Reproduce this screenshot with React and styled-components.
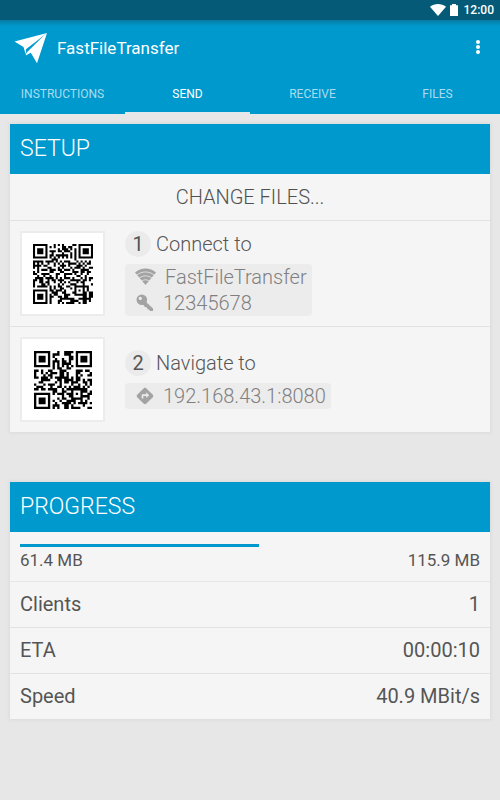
import React from 'react'
import styled, { createGlobalStyle } from 'styled-components'
import { MdDirections } from 'react-icons/md'

const GlobalStyle = createGlobalStyle`
  * {
    box-sizing: border-box;
  }
  body {
    margin: 0;
    background: #e7e7e7;
    color: #555;
    font-family: Roboto, "Noto Sans", sans-serif;
  }
`;
const StatusBar = styled.div`
  display: flex;
  justify-content: flex-end;
  align-items: center;
  gap: 4px;
  height: 20px;
  padding: 0 6px;
  background: #055a78;
  color: white;
  font-size: 12px;
  font-weight: 500;
`;
const StatusTime = styled.time`
  margin-left: 2px;
`;
const Header = styled.header`
  background: linear-gradient(#067ba2, #0099cd 6px);
  color: white;
`;
const ActionBar = styled.div`
  display: flex;
  align-items: center;
  gap: 9px;
  height: 56px;
  padding: 0 14px;
`;
const AppName = styled.h1`
  flex: 1;
  margin: 0;
  font-size: 17px;
  font-weight: 400;
`;
const MenuButton = styled.button`
  display: flex;
  padding: 0;
  border: none;
  background: none;
  color: white;
  cursor: pointer;
`;
const Tabs = styled.nav`
  display: flex;
`;
const Tab = styled.a`
  flex: 1;
  height: 38px;
  border-bottom: 2px solid ${({ $active }) => ($active ? '#e3e8ea' : 'transparent')};
  color: ${({ $active }) => ($active ? 'white' : '#a9dcf0')};
  font-size: 12px;
  line-height: 37px;
  text-align: center;
  text-decoration: none;
`;
const Content = styled.main`
  display: flex;
  flex-direction: column;
  gap: 50px;
  padding: 10px;
`;
const Card = styled.section`
  background: #f5f5f5;
  box-shadow: 0 0 3px 1px #dadada;
`;
const CardTitle = styled.h2`
  margin: 0;
  padding: 0 10px;
  background: #0099cd;
  color: white;
  font-size: 23px;
  font-weight: 300;
  line-height: 50px;
`;
const ChangeButton = styled.button`
  display: block;
  width: 100%;
  height: 47px;
  padding: 0;
  border: none;
  border-bottom: 1px solid #e2e2e2;
  background: none;
  color: #505050;
  font: 300 20px Roboto, "Noto Sans", sans-serif;
  cursor: pointer;
`;
const Step = styled.div`
  display: flex;
  align-items: center;
  gap: 20px;
  box-sizing: content-box;
  height: 105px;
  padding: 0 10px;

  & + & {
    border-top: 1px solid #e2e2e2;
  }
`;
const QrFrame = styled.div`
  display: flex;
  justify-content: center;
  align-items: center;
  width: 85px;
  height: 85px;
  border: 2px solid #ececec;
  background: white;
`;
const StepBody = styled.div`
  display: flex;
  flex-direction: column;
  align-items: flex-start;
  gap: 7px;
`;
const StepTitle = styled.h3`
  display: flex;
  align-items: center;
  gap: 5px;
  margin: 0;
  color: #555;
  font-size: 20px;
  font-weight: 300;
`;
const StepNumber = styled.span`
  width: 26px;
  border-radius: 50%;
  background: #ebebeb;
  font-weight: 400;
  line-height: 26px;
  text-align: center;
`;
const Details = styled.div`
  padding: 0 5px 0 10px;
  border-radius: 4px;
  background: #ececec;
  color: #808080;
`;
const Detail = styled.div`
  display: flex;
  align-items: center;
  gap: 8px;
  font-size: 20px;
  font-weight: 300;
  line-height: 26px;

  svg {
    color: #a3a3a3;
  }
`;
const Transfer = styled.div`
  height: 50px;
  padding: 12px 10px 0;
  border-bottom: 1px solid #e7e7e7;
`;
const Bar = styled.progress`
  display: block;
  width: 100%;
  height: 3px;
  border: none;
  appearance: none;
  background: transparent;

  &::-webkit-progress-bar {
    background: transparent;
  }
  &::-webkit-progress-value {
    background: #0099cd;
  }
`;
const Sizes = styled.div`
  display: flex;
  justify-content: space-between;
  font-size: 17px;
  line-height: 27px;
`;
const Stats = styled.table`
  width: 100%;
  border-collapse: collapse;
  font-size: 20px;
  line-height: 45px;
`;
const StatRow = styled.tr`
  & + & {
    border-top: 1px solid #e2e2e2;
  }
`;
const StatLabel = styled.th`
  padding: 0 10px;
  font-weight: 400;
  text-align: left;
`;
const StatValue = styled.td`
  padding: 0 10px;
  text-align: right;
`;

// size, data codewords and error correction codewords per version (level L)
const VERSIONS = [
  { size: 25, data: 34, ecc: 10 },
  { size: 29, data: 55, ecc: 15 },
];

const MASKS = [
  (r, c) => (r + c) % 2 === 0,
  (r) => r % 2 === 0,
  (r, c) => c % 3 === 0,
  (r, c) => (r + c) % 3 === 0,
  (r, c) => (Math.floor(r / 2) + Math.floor(c / 3)) % 2 === 0,
  (r, c) => ((r * c) % 2) + ((r * c) % 3) === 0,
  (r, c) => (((r * c) % 2) + ((r * c) % 3)) % 2 === 0,
  (r, c) => (((r + c) % 2) + ((r * c) % 3)) % 2 === 0,
];

const gfMul = (a, b) => {
  let z = 0;
  for (let i = 7; i >= 0; i--) {
    z = (z << 1) ^ ((z >>> 7) * 0x11d);
    if ((b >>> i) & 1) z ^= a;
  }
  return z;
};

const eccBytes = (data, degree) => {
  const gen = new Array(degree).fill(0);
  gen[degree - 1] = 1;
  let root = 1;
  for (let i = 0; i < degree; i++) {
    for (let j = 0; j < degree; j++) {
      gen[j] = gfMul(gen[j], root);
      if (j + 1 < degree) gen[j] ^= gen[j + 1];
    }
    root = gfMul(root, 2);
  }
  const rem = new Array(degree).fill(0);
  data.forEach((byte) => {
    const factor = byte ^ rem.shift();
    rem.push(0);
    gen.forEach((g, i) => {
      rem[i] ^= gfMul(g, factor);
    });
  });
  return rem;
};

const toCodewords = (text, { data, ecc }) => {
  let bits = '0100' + text.length.toString(2).padStart(8, '0');
  for (const ch of text) bits += ch.charCodeAt(0).toString(2).padStart(8, '0');
  bits += '0000';
  const bytes = bits.match(/.{8}/g).map((b) => parseInt(b, 2));
  for (let pad = 0xec; bytes.length < data; pad ^= 0xfd) bytes.push(pad);
  return [...bytes, ...eccBytes(bytes, ecc)];
};

const buildMatrix = (text, version, mask) => {
  const n = version.size;
  const grid = Array.from({ length: n }, () => new Array(n).fill(null));
  const square = (row, col, radius, isDark) => {
    for (let y = -radius; y <= radius; y++) {
      for (let x = -radius; x <= radius; x++) {
        if (grid[row + y] && grid[row + y][col + x] !== undefined) {
          grid[row + y][col + x] = isDark(Math.max(Math.abs(x), Math.abs(y)));
        }
      }
    }
  };
  for (let i = 0; i < n; i++) {
    grid[6][i] = i % 2 === 0;
    grid[i][6] = i % 2 === 0;
  }
  [[3, 3], [3, n - 4], [n - 4, 3]].forEach(([r, c]) => square(r, c, 4, (d) => d !== 2 && d !== 4));
  square(n - 7, n - 7, 2, (d) => d !== 1);

  const level = (1 << 3) | mask;
  let rem = level;
  for (let i = 0; i < 10; i++) rem = (rem << 1) ^ ((rem >>> 9) * 0x537);
  const format = ((level << 10) | rem) ^ 0x5412;
  const bit = (i) => ((format >>> i) & 1) === 1;
  for (let i = 0; i <= 5; i++) grid[i][8] = bit(i);
  grid[7][8] = bit(6);
  grid[8][8] = bit(7);
  grid[8][7] = bit(8);
  for (let i = 9; i < 15; i++) grid[8][14 - i] = bit(i);
  for (let i = 0; i < 8; i++) grid[8][n - 1 - i] = bit(i);
  for (let i = 8; i < 15; i++) grid[n - 15 + i][8] = bit(i);
  grid[n - 8][8] = true;

  const codewords = toCodewords(text, version);
  let k = 0;
  for (let right = n - 1; right >= 1; right -= 2) {
    if (right === 6) right = 5;
    for (let v = 0; v < n; v++) {
      for (let j = 0; j < 2; j++) {
        const col = right - j;
        const row = ((right + 1) & 2) === 0 ? n - 1 - v : v;
        if (grid[row][col] === null) {
          const dark = ((codewords[k >>> 3] >>> (7 - (k & 7))) & 1) === 1;
          grid[row][col] = dark !== MASKS[mask](row, col);
          k++;
        }
      }
    }
  }
  return grid;
};

// lower is better, see the four penalty rules of the QR standard
const penalty = (grid) => {
  const n = grid.length;
  const lines = [...grid, ...grid.map((_, c) => grid.map((row) => row[c]))]
    .map((line) => line.map((m) => (m ? '1' : '0')).join(''));
  let score = 0;
  lines.forEach((line) => {
    (line.match(/0{5,}|1{5,}/g) || []).forEach((run) => {
      score += run.length - 2;
    });
    for (let i = 0; i < n - 6; i++) {
      if (line.slice(i, i + 7) !== '1011101') continue;
      const before = line.slice(Math.max(0, i - 4), i);
      const after = line.slice(i + 7, i + 11);
      if (!before.includes('1') || !after.includes('1')) score += 40;
    }
  });
  for (let r = 0; r < n - 1; r++) {
    for (let c = 0; c < n - 1; c++) {
      const m = grid[r][c];
      if (m === grid[r][c + 1] && m === grid[r + 1][c] && m === grid[r + 1][c + 1]) score += 3;
    }
  }
  const dark = grid.flat().filter(Boolean).length;
  return score + Math.floor(Math.abs((dark / (n * n)) * 100 - 50) / 5) * 10;
};

const QrCode = ({ text, width }) => {
  const version = VERSIONS.find((v) => text.length + 2 <= v.data);
  const grid = MASKS.map((_, mask) => buildMatrix(text, version, mask))
    .reduce((best, next) => (penalty(next) < penalty(best) ? next : best));
  const path = grid
    .map((row, y) => row.map((dark, x) => (dark ? `M${x} ${y}h1v1h-1z` : '')).join(''))
    .join('');
  return (
    <svg width={width} height={width} viewBox={`0 0 ${version.size} ${version.size}`} role="img" aria-label={text}>
      <path d={path} fill="black" />
    </svg>
  )
}

const PlaneLogo = () => (
  <svg width="34" height="32" viewBox="0 0 34 32" fill="white" aria-hidden="true">
    <path d="M0.5 9.5 33 1 12 17.2 11.8 22.8 9.5 15z" />
    <path d="M33 1 23 31.3 16.8 20.7 11.8 23.6 13.4 17.6z" />
    <path d="M29 4.4 12.6 17.2 12.2 21z" fill="#0099cd" />
  </svg>
)

const WifiFan = () => (
  <svg width="22" height="18" viewBox="0 0 22 18" fill="none" aria-hidden="true">
    <path d="M0 4.500C6-.7 15-.7 21 4.500L10.500 17z" fill="currentColor" />
    <path d="M1.500 7.200c5.400-4.300 12.600-4.300 18 0M4 10.200c4-3.100 9-3.100 13 0M6.500 13.200c2.500-1.900 5.500-1.900 8 0" stroke="#ececec" strokeWidth="0.8" />
  </svg>
)

const KeyIcon = () => (
  <svg width="20" height="18" viewBox="0 0 20 18" aria-hidden="true">
    <path
      fill="currentColor"
      fillRule="evenodd"
      d="M6.800 0.500a5.300 5.300 0 1 1 0 10.600a5.300 5.300 0 0 1 0-10.600zM5.300 2.800a1.600 1.600 0 1 0 0 3.200a1.600 1.600 0 0 0 0-3.200z"
    />
    <path d="M10 7 18 14.500v2.500h-3l-1-1.500-1.500-.3-.5-1.700-2-.5L7.500 10z" fill="currentColor" />
  </svg>
)

const tabs = ['INSTRUCTIONS', 'SEND', 'RECEIVE', 'FILES'];
const stats = [
  ['Clients', '1'],
  ['ETA', '00:00:10'],
  ['Speed', '40.9 MBit/s'],
];

const App = () => {
  return (
    <>
      <GlobalStyle />
      <StatusBar>
        <svg width="16" height="12" viewBox="0 0 16 12" fill="white" aria-hidden="true">
          <path d="M0 2.800C4.500-.8 11.500-.8 16 2.800L8 12z" />
        </svg>
        <svg width="8" height="12" viewBox="0 0 8 12" fill="white" aria-hidden="true">
          <path d="M0 1.200h2V0h4v1.200h2V12H0z" />
        </svg>
        <StatusTime>12:00</StatusTime>
      </StatusBar>
      <Header>
        <ActionBar>
          <PlaneLogo />
          <AppName>FastFileTransfer</AppName>
          <MenuButton aria-label="More options">
            <svg width="16" height="20" viewBox="0 0 16 20" fill="currentColor">
              <circle cx="8" cy="4" r="2" />
              <circle cx="8" cy="9" r="2" />
              <circle cx="8" cy="14" r="2" />
            </svg>
          </MenuButton>
        </ActionBar>
        <Tabs>
          {tabs.map((tab) => (
            <Tab key={tab} href={`#${tab.toLowerCase()}`} $active={tab === 'SEND'}>{tab}</Tab>
          ))}
        </Tabs>
      </Header>
      <Content>
        <Card>
          <CardTitle>SETUP</CardTitle>
          <ChangeButton>CHANGE FILES...</ChangeButton>
          <Step>
            <QrFrame>
              <QrCode text="WIFI:T:WPA;S:FastFileTransfer;P:12345678;;" width={60} />
            </QrFrame>
            <StepBody>
              <StepTitle><StepNumber>1</StepNumber>Connect to</StepTitle>
              <Details>
                <Detail><WifiFan />FastFileTransfer</Detail>
                <Detail><KeyIcon />12345678</Detail>
              </Details>
            </StepBody>
          </Step>
          <Step>
            <QrFrame>
              <QrCode text="http://192.168.43.1:8080" width={58} />
            </QrFrame>
            <StepBody>
              <StepTitle><StepNumber>2</StepNumber>Navigate to</StepTitle>
              <Details>
                <Detail><MdDirections size={20} />192.168.43.1:8080</Detail>
              </Details>
            </StepBody>
          </Step>
        </Card>
        <Card>
          <CardTitle>PROGRESS</CardTitle>
          <Transfer>
            <Bar value={52} max={100} aria-label="Transfer progress" />
            <Sizes><span>61.4 MB</span><span>115.9 MB</span></Sizes>
          </Transfer>
          <Stats>
            <tbody>
              {stats.map(([label, value]) => (
                <StatRow key={label}>
                  <StatLabel scope="row">{label}</StatLabel>
                  <StatValue>{value}</StatValue>
                </StatRow>
              ))}
            </tbody>
          </Stats>
        </Card>
      </Content>
    </>
  )
}

export default App
